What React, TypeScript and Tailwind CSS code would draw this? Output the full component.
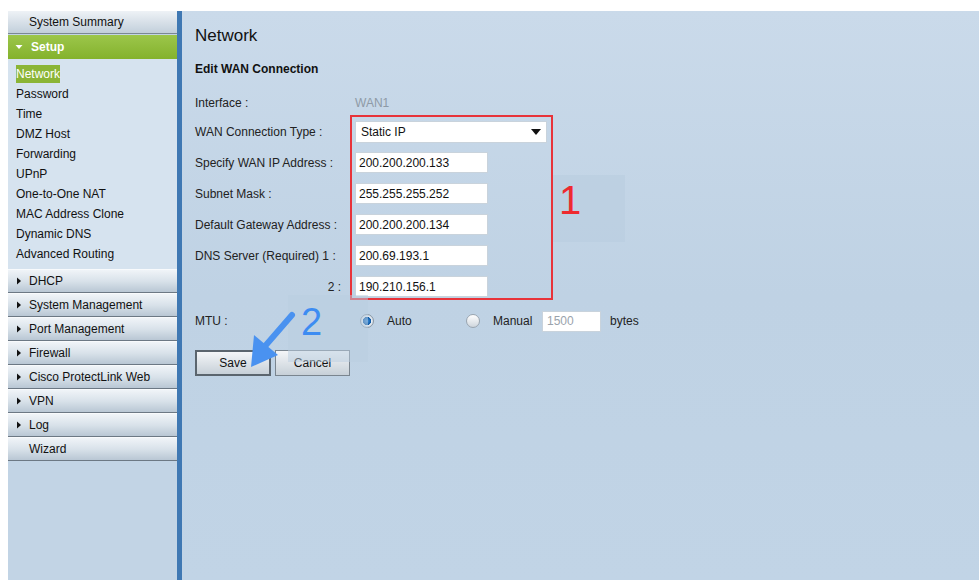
import { ReactNode } from 'react'

const subItems = [
  'Network', 'Password', 'Time', 'DMZ Host', 'Forwarding', 'UPnP',
  'One-to-One NAT', 'MAC Address Clone', 'Dynamic DNS', 'Advanced Routing',
]

const groups = [
  'DHCP', 'System Management', 'Port Management', 'Firewall',
  'Cisco ProtectLink Web', 'VPN', 'Log',
]

function Caret() {
  return (
    <svg width="6" height="8" viewBox="0 0 6 8" className="mr-[7px]">
      <path d="M1 0.5 L5 4 L1 7.5 Z" fill="#111" />
    </svg>
  )
}

function MenuRow({ children, caret }: { children: ReactNode; caret?: boolean }) {
  return (
    <div className="h-[24px] flex items-center pl-[8px] bg-linear-to-b from-[#f0f4f8] via-[#d9e2ea] to-[#b9c7d4] border-b border-[#6c7884] border-t border-t-[#f8fafc] text-[12px] text-[#111]">
      {caret ? <Caret /> : <span className="w-[13px]" />}
      {children}
    </div>
  )
}

function Field({ label, value, right }: { label: string; value: string; right?: boolean }) {
  return (
    <div className="flex items-center h-[31px]">
      <div className={`w-[160px] text-[12px] text-[#222] ${right ? 'text-right pr-[14px]' : ''}`}>{label}</div>
      <div className="w-[133px] h-[21px] bg-white border border-[#c9d3dc] flex items-center px-[3px] text-[12px] text-[#111]">{value}</div>
    </div>
  )
}

export default function App() {
  return (
    <div className="w-[979px] h-[580px] bg-white pt-[11px] pl-[8px] overflow-hidden" style={{ fontFamily: '"Liberation Sans", Arial, sans-serif' }}>
      <div className="flex h-[569px]">
        {/* left navigation */}
        <aside className="w-[169px] bg-[#c2d4e5] flex flex-col">
          <div className="h-[23px] flex items-center pl-[21px] bg-linear-to-b from-[#eef2f6] to-[#c2cfdb] border-b border-[#7b8894] text-[12px] text-[#111]">
            System Summary
          </div>
          <div className="h-[24px] mt-[1px] flex items-center pl-[7px] bg-linear-to-b from-[#9cc64a] to-[#84b22c] text-white font-bold text-[12px]">
            <svg width="8" height="6" viewBox="0 0 8 6" className="mr-[8px]">
              <path d="M0.5 1 L7.5 1 L4 5 Z" fill="#fff" />
            </svg>
            Setup
          </div>
          <div className="bg-[#d6e3ef] pt-[5px] pb-[5px]">
            {subItems.map((s, i) => (
              <div key={s} className="h-[20px] flex items-center pl-[8px] text-[12px]">
                <span className={i === 0 ? 'bg-[#8bb536] text-white' : 'text-[#111]'}>{s}</span>
              </div>
            ))}
          </div>
          {groups.map(g => (
            <MenuRow key={g} caret>{g}</MenuRow>
          ))}
          <MenuRow>Wizard</MenuRow>
        </aside>

        <div className="w-[5px] bg-[#3f78b3]" />

        {/* main panel */}
        <main className="relative flex-1 bg-linear-to-b from-[#cadaea] via-[#bfd2e4] to-[#c1d4e6] pl-[13px] pt-[14px]">
          <h1 className="text-[17px] text-[#111] leading-[22px]">Network</h1>
          <h2 className="mt-[13px] text-[12px] font-bold text-[#111]">Edit WAN Connection</h2>

          <div className="mt-[15px] flex items-center h-[20px]">
            <div className="w-[160px] text-[12px] text-[#222]">Interface :</div>
            <div className="text-[12px] text-[#8e9aa6]">WAN1</div>
          </div>

          <div className="relative mt-[3px]">
            <div className="flex items-center h-[31px]">
              <div className="w-[160px] text-[12px] text-[#222]">WAN Connection Type :</div>
              <div className="w-[192px] h-[22px] bg-white border border-[#c9d3dc] flex items-center justify-between px-[5px] text-[12px] text-[#111]">
                Static IP
                <svg width="10" height="6" viewBox="0 0 10 6">
                  <path d="M0 0 L10 0 L5 6 Z" fill="#111" />
                </svg>
              </div>
            </div>
            <Field label="Specify WAN IP Address :" value="200.200.200.133" />
            <Field label="Subnet Mask :" value="255.255.255.252" />
            <Field label="Default Gateway Address :" value="200.200.200.134" />
            <Field label="DNS Server (Required) 1 :" value="200.69.193.1" />
            <Field label="2 :" value="190.210.156.1" right />
            {/* annotation 1 */}
            <div className="absolute left-[155px] top-[-1px] w-[203px] h-[185px] border-2 border-[#e8333a]" />
            <div className="absolute left-[358px] top-[59px] w-[72px] h-[67px] bg-[#b9cddf]/60" />
            <div className="absolute left-[364px] top-[64px] text-[40px] text-[#ee2a2f] leading-none">1</div>
          </div>

          <div className="mt-[8px] flex items-center h-[22px] text-[12px] text-[#222]">
            <div className="w-[165px]">MTU :</div>
            <span className="w-[14px] h-[14px] rounded-full bg-[radial-gradient(circle,#3f92e0_0%,#0e5aa6_45%,#e8eef4_52%,#b7c3cf_100%)] border border-[#8b97a3]" />
            <span className="ml-[13px] w-[79px]">Auto</span>
            <span className="w-[14px] h-[14px] rounded-full bg-linear-to-b from-[#ffffff] to-[#cfd6dd] border border-[#9aa5b0]" />
            <span className="ml-[13px] w-[49px]">Manual</span>
            <div className="w-[59px] h-[21px] bg-white border border-[#c9d3dc] flex items-center px-[4px] text-[#9aa3ac]">1500</div>
            <span className="ml-[9px]">bytes</span>
          </div>

          <div className="mt-[18px] flex gap-[4px]">
            <button className="w-[76px] h-[26px] bg-linear-to-b from-[#f4f6f8] to-[#c7d0d8] border-2 border-[#5b656e] text-[12px] text-[#111]">Save</button>
            <button className="w-[75px] h-[26px] bg-linear-to-b from-[#f4f6f8] to-[#c7d0d8] border border-[#7a858f] text-[12px] text-[#111]">Cancel</button>
          </div>

          {/* annotation 2 */}
          <div className="absolute left-[106px] top-[284px] w-[80px] h-[67px] bg-[#b9cddf]/50" />
          <div className="absolute left-[119px] top-[292px] text-[38px] text-[#3d8cf2] leading-none">2</div>
          <svg className="absolute left-[60px] top-[300px]" width="56" height="60" viewBox="0 0 56 60">
            <path d="M50 4 L24 34" stroke="#4a92f0" strokeWidth="6" strokeLinecap="round" />
            <path d="M9 56 L12 24 L36 44 Z" fill="#4a92f0" />
          </svg>
        </main>
      </div>
    </div>
  )
}
